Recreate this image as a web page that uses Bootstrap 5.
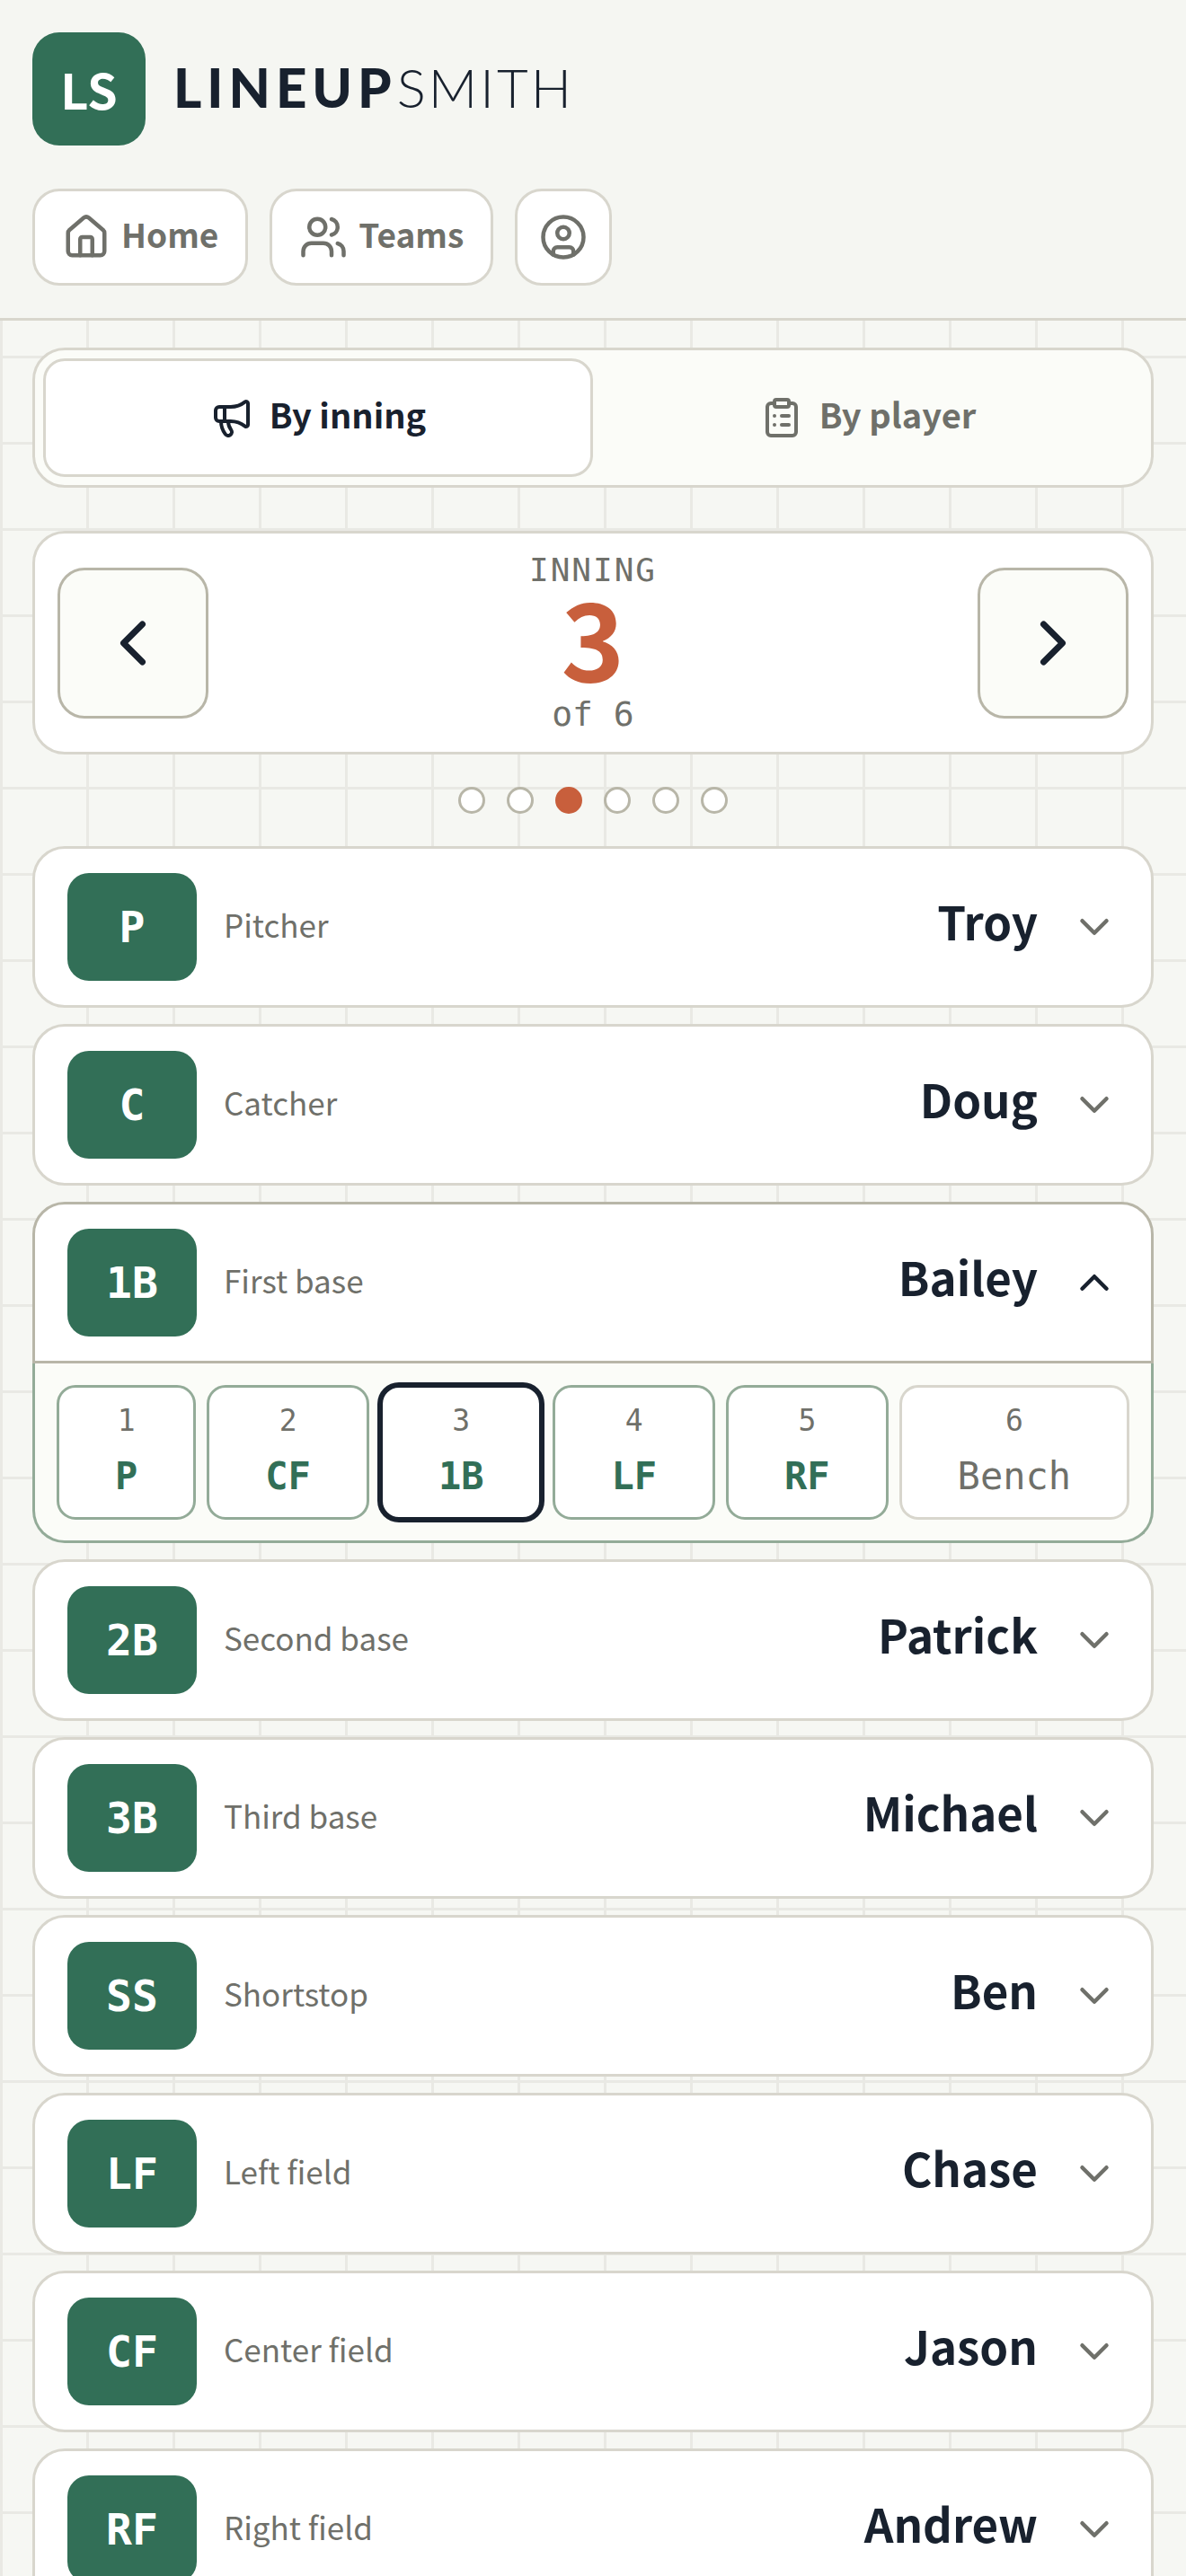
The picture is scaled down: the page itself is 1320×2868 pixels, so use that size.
<!DOCTYPE html>
<html lang="en">
<head>
    <meta charset="UTF-8">
    <meta name="viewport" content="width=device-width, initial-scale=1.0">
    <title>LineupSmith</title>
    <link href="https://cdn.jsdelivr.net/npm/bootstrap@5.3.0/dist/css/bootstrap.min.css" rel="stylesheet">
    <style>
        body {
            font-family: "Noto Sans CJK JP", "Noto Sans", sans-serif;
            color: #18212e;
            background-color: #f6f7f3;
            background-image: linear-gradient(#e9e9e4 3px, transparent 3px), linear-gradient(90deg, #e9e9e4 3px, transparent 3px);
            background-size: 96px 96px;
            background-position: 0 12px;
        }
        svg { fill: none; stroke: currentColor; stroke-width: 2; stroke-linecap: round; stroke-linejoin: round; flex-shrink: 0; }
        .ico-54 { width: 54px; height: 54px; }
        .ico-48 { width: 48px; height: 48px; }
        .ico-84 { width: 84px; height: 84px; }
        .lift { padding-bottom: 8px; }

        .top-bar { background: #f5f6f2; border-bottom: 3px solid #d8d6cd; padding: 36px 36px 36px; }
        .logo-box { width: 126px; height: 126px; border-radius: 30px; background: #326f57; color: #fff; font-size: 54px; font-weight: 700; line-height: 1; }
        .logo-text { font-family: Lato, sans-serif; font-size: 60px; line-height: 1; letter-spacing: 6px; margin-left: 31px; padding-bottom: 4px; }
        .logo-text b { font-weight: 900; }
        .logo-text span { font-weight: 300; letter-spacing: 3px; }
        .nav-row { margin-top: 48px; gap: 24px; }
        .nav-btn { height: 108px; padding: 0 30px; border: 3px solid #d8d6cd; border-radius: 30px; background: #fff; color: #6f706a; font-size: 37px; font-weight: 700; gap: 12px; line-height: 1; }
        .nav-btn.only-ico { width: 108px; padding: 0; }

        .page-body { padding: 30px 36px 0; }
        .view-tabs { height: 156px; padding: 9px; border: 3px solid #d8d6cd; border-radius: 36px; background: #fbfcf8; margin-bottom: 48px; }
        .view-tab { flex: 1 1 0; gap: 18px; font-size: 38px; font-weight: 700; line-height: 1; color: #6f706a; border: 3px solid transparent; border-radius: 24px; }
        .view-tab.on { background: #fff; color: #18212e; border-color: #d8d6cd; }

        .inning-box { height: 249px; padding: 0 25px; border: 3px solid #d8d6cd; border-radius: 36px; background: #fff; }
        .step-btn { width: 168px; height: 168px; padding: 0; border: 3px solid #b8b6a8; border-radius: 30px; background: #fbfcf8; color: #18212e; }
        .mono { font-family: "DejaVu Sans Mono", "Liberation Mono", monospace; }
        .inning-lbl { font-size: 36px; line-height: 42px; letter-spacing: 2px; color: #6f706a; }
        .inning-num { font-size: 120px; line-height: 102px; padding-bottom: 14px; font-weight: 700; color: #c85f3c; font-family: "Noto Sans CJK JP", sans-serif; }
        .inning-of { font-size: 38px; line-height: 46px; color: #6f706a; }

        .dot-row { gap: 24px; margin: 36px 0; }
        .dot-item { width: 30px; height: 30px; border-radius: 50%; border: 3px solid #b8b6a8; background: #fff; }
        .dot-item.on { background: #c85f3c; border-color: #c85f3c; }

        .slot-list { gap: 18px; }
        .slot-row { height: 180px; padding: 0 36px 0 36px; border: 3px solid #d8d6cd; border-radius: 36px; background: #fff; }
        .slot-badge { width: 144px; height: 120px; border-radius: 24px; background: #326f57; color: #fff; font-size: 48px; font-weight: 700; line-height: 1; }
        .slot-pos { margin-left: 30px; font-size: 35px; line-height: 1; padding-bottom: 8px; color: #6f706a; }
        .slot-name { margin-left: auto; font-size: 51px; font-weight: 700; line-height: 1; padding-bottom: 14px; }
        .slot-chev { margin-left: 36px; color: #6f706a; }
        .slot-open .slot-row { border-color: #b8b6a8; border-radius: 36px 36px 0 0; }
        .slot-open .slot-chev { color: #18212e; }
        .slot-drawer { height: 200px; padding: 24px 24px 23px; gap: 12px; border: 3px solid #93ab98; border-top: 0; border-radius: 0 0 36px 36px; background: #fbfcf8; }
        .turn-cell { flex: 1 1 auto; height: 150px; padding: 15px 60px 0; border: 3px solid #93ab98; border-radius: 21px; background: #fff; color: #326f57; }
        .turn-cell.idle { border-color: #d8d6cd; color: #6f706a; }
        .turn-cell.idle .turn-pos { font-weight: 400; }
        .turn-cell.now { border-color: #18212e; box-shadow: 0 0 0 3px #18212e; }
        .turn-no { font-size: 33px; line-height: 44px; color: #6f706a; }
        .turn-pos { font-size: 42px; line-height: 48px; font-weight: 700; margin-top: 16px; }
    </style>
</head>
<body>
    <header class="top-bar">
        <div class="d-flex align-items-center">
            <div class="logo-box d-flex align-items-center justify-content-center">LS</div>
            <div class="logo-text"><b>LINEUP</b><span>SMITH</span></div>
        </div>
        <div class="nav-row d-flex">
            <button class="nav-btn btn d-flex align-items-center">
                <svg class="ico-54" viewBox="0 0 24 24"><path d="M15 21v-8a1 1 0 0 0-1-1h-4a1 1 0 0 0-1 1v8"/><path d="M3 10a2 2 0 0 1 .709-1.528l7-5.999a2 2 0 0 1 2.582 0l7 5.999A2 2 0 0 1 21 10v9a2 2 0 0 1-2 2H5a2 2 0 0 1-2-2z"/></svg>
                <span class="lift">Home</span>
            </button>
            <button class="nav-btn btn d-flex align-items-center">
                <svg class="ico-54" viewBox="0 0 24 24"><path d="M16 21v-2a4 4 0 0 0-4-4H6a4 4 0 0 0-4 4v2"/><circle cx="9" cy="7" r="4"/><path d="M22 21v-2a4 4 0 0 0-3-3.87"/><path d="M16 3.13a4 4 0 0 1 0 7.75"/></svg>
                <span class="lift">Teams</span>
            </button>
            <button class="nav-btn only-ico btn d-flex align-items-center justify-content-center">
                <svg class="ico-54" viewBox="0 0 24 24"><circle cx="12" cy="12" r="10"/><circle cx="12" cy="10" r="3"/><path d="M7 20.662V19a2 2 0 0 1 2-2h6a2 2 0 0 1 2 2v1.662"/></svg>
            </button>
        </div>
    </header>

    <main class="page-body">
        <div class="view-tabs d-flex">
            <div class="view-tab on d-flex align-items-center justify-content-center">
                <svg class="ico-48" viewBox="0 0 24 24"><path d="M11 6a13 13 0 0 0 8.4-2.8A1 1 0 0 1 21 4v12a1 1 0 0 1-1.6.8A13 13 0 0 0 11 14H5a2 2 0 0 1-2-2V8a2 2 0 0 1 2-2z"/><path d="M6 14a12 12 0 0 0 2.4 7.2 2 2 0 0 0 3.2-2.4A8 8 0 0 1 10 14"/><path d="M8 6v8"/></svg>
                <span class="lift">By inning</span>
            </div>
            <div class="view-tab d-flex align-items-center justify-content-center">
                <svg class="ico-48" viewBox="0 0 24 24"><rect x="8" y="2" width="8" height="4" rx="1"/><path d="M16 4h2a2 2 0 0 1 2 2v14a2 2 0 0 1-2 2H6a2 2 0 0 1-2-2V6a2 2 0 0 1 2-2h2"/><path d="M12 11h4"/><path d="M12 16h4"/><path d="M8 11h.01"/><path d="M8 16h.01"/></svg>
                <span class="lift">By player</span>
            </div>
        </div>

        <div class="inning-box d-flex align-items-center justify-content-between">
            <button class="step-btn btn d-flex align-items-center justify-content-center">
                <svg class="ico-84" viewBox="0 0 24 24"><path d="m15 18-6-6 6-6"/></svg>
            </button>
            <div class="text-center">
                <div class="inning-lbl mono">INNING</div>
                <div class="inning-num">3</div>
                <div class="inning-of mono">of 6</div>
            </div>
            <button class="step-btn btn d-flex align-items-center justify-content-center">
                <svg class="ico-84" viewBox="0 0 24 24"><path d="m9 18 6-6-6-6"/></svg>
            </button>
        </div>

        <div class="dot-row d-flex justify-content-center">
            <span class="dot-item"></span><span class="dot-item"></span><span class="dot-item on"></span><span class="dot-item"></span><span class="dot-item"></span><span class="dot-item"></span>
        </div>

        <div class="slot-list d-flex flex-column">
            <div class="slot-row d-flex align-items-center">
                <div class="slot-badge mono d-flex align-items-center justify-content-center">P</div>
                <div class="slot-pos">Pitcher</div>
                <div class="slot-name">Troy</div>
                <svg class="ico-54 slot-chev" viewBox="0 0 24 24"><path d="m6 9 6 6 6-6"/></svg>
            </div>
            <div class="slot-row d-flex align-items-center">
                <div class="slot-badge mono d-flex align-items-center justify-content-center">C</div>
                <div class="slot-pos">Catcher</div>
                <div class="slot-name">Doug</div>
                <svg class="ico-54 slot-chev" viewBox="0 0 24 24"><path d="m6 9 6 6 6-6"/></svg>
            </div>
            <div class="slot-open">
                <div class="slot-row d-flex align-items-center">
                    <div class="slot-badge mono d-flex align-items-center justify-content-center">1B</div>
                    <div class="slot-pos">First base</div>
                    <div class="slot-name">Bailey</div>
                    <svg class="ico-54 slot-chev" viewBox="0 0 24 24"><path d="m18 15-6-6-6 6"/></svg>
                </div>
                <div class="slot-drawer d-flex">
                    <div class="turn-cell text-center"><div class="turn-no mono">1</div><div class="turn-pos mono">P</div></div>
                    <div class="turn-cell text-center"><div class="turn-no mono">2</div><div class="turn-pos mono">CF</div></div>
                    <div class="turn-cell now text-center"><div class="turn-no mono">3</div><div class="turn-pos mono">1B</div></div>
                    <div class="turn-cell text-center"><div class="turn-no mono">4</div><div class="turn-pos mono">LF</div></div>
                    <div class="turn-cell text-center"><div class="turn-no mono">5</div><div class="turn-pos mono">RF</div></div>
                    <div class="turn-cell idle text-center"><div class="turn-no mono">6</div><div class="turn-pos mono">Bench</div></div>
                </div>
            </div>
            <div class="slot-row d-flex align-items-center">
                <div class="slot-badge mono d-flex align-items-center justify-content-center">2B</div>
                <div class="slot-pos">Second base</div>
                <div class="slot-name">Patrick</div>
                <svg class="ico-54 slot-chev" viewBox="0 0 24 24"><path d="m6 9 6 6 6-6"/></svg>
            </div>
            <div class="slot-row d-flex align-items-center">
                <div class="slot-badge mono d-flex align-items-center justify-content-center">3B</div>
                <div class="slot-pos">Third base</div>
                <div class="slot-name">Michael</div>
                <svg class="ico-54 slot-chev" viewBox="0 0 24 24"><path d="m6 9 6 6 6-6"/></svg>
            </div>
            <div class="slot-row d-flex align-items-center">
                <div class="slot-badge mono d-flex align-items-center justify-content-center">SS</div>
                <div class="slot-pos">Shortstop</div>
                <div class="slot-name">Ben</div>
                <svg class="ico-54 slot-chev" viewBox="0 0 24 24"><path d="m6 9 6 6 6-6"/></svg>
            </div>
            <div class="slot-row d-flex align-items-center">
                <div class="slot-badge mono d-flex align-items-center justify-content-center">LF</div>
                <div class="slot-pos">Left field</div>
                <div class="slot-name">Chase</div>
                <svg class="ico-54 slot-chev" viewBox="0 0 24 24"><path d="m6 9 6 6 6-6"/></svg>
            </div>
            <div class="slot-row d-flex align-items-center">
                <div class="slot-badge mono d-flex align-items-center justify-content-center">CF</div>
                <div class="slot-pos">Center field</div>
                <div class="slot-name">Jason</div>
                <svg class="ico-54 slot-chev" viewBox="0 0 24 24"><path d="m6 9 6 6 6-6"/></svg>
            </div>
            <div class="slot-row d-flex align-items-center">
                <div class="slot-badge mono d-flex align-items-center justify-content-center">RF</div>
                <div class="slot-pos">Right field</div>
                <div class="slot-name">Andrew</div>
                <svg class="ico-54 slot-chev" viewBox="0 0 24 24"><path d="m6 9 6 6 6-6"/></svg>
            </div>
        </div>
    </main>

    <script src="https://cdn.jsdelivr.net/npm/bootstrap@5.3.0/dist/js/bootstrap.bundle.min.js"></script>
</body>
</html>
